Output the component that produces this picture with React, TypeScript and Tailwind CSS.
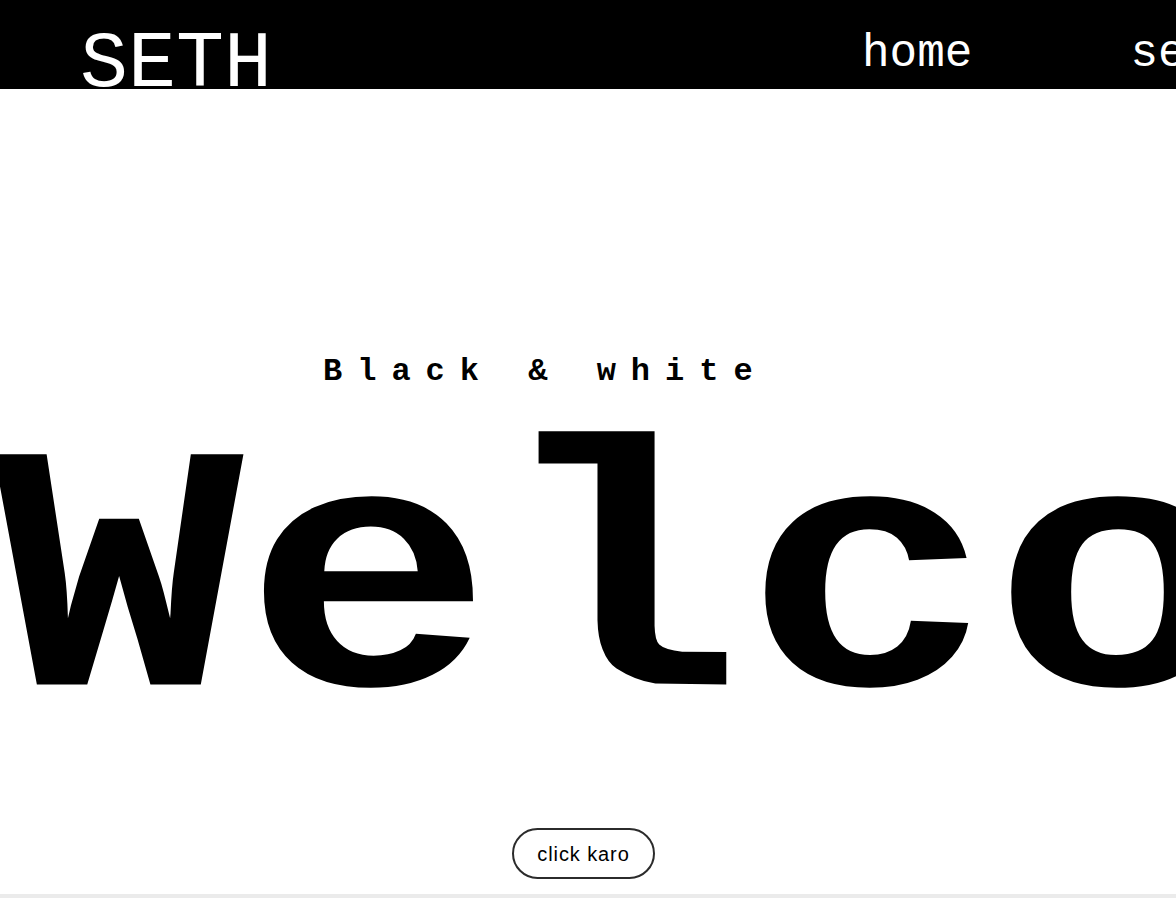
import React from "react";

export default function App() {
  const nav = ["home", "services", "about", "contact"];

  return (
    <div className="h-[898px] w-full overflow-hidden flex flex-col bg-white font-['Courier_New','Liberation_Mono',monospace]">
      {/* Header */}
      <header className="h-[89px] shrink-0 bg-black text-white flex items-start overflow-hidden whitespace-nowrap">
        <div className="pl-[80px] pt-[25px] text-[80px] leading-none w-[862px] shrink-0">SETH</div>
        <nav className="flex gap-[158px] pt-[31px] text-[46px] leading-none">
          {nav.map((item) => (
            <a key={item} href="#" className="shrink-0">
              {item}
            </a>
          ))}
        </nav>
      </header>

      {/* Hero */}
      <main className="flex-1 flex flex-col items-start whitespace-nowrap">
        <p className="mt-[267px] ml-[323px] text-[32px] leading-none font-bold tracking-[15px] text-black">
          Black &amp; white
        </p>
        <h1 className="mt-[30px] ml-[-6px] text-[416px] leading-[300px] font-bold text-black origin-bottom scale-y-[0.84]">
          Welcome
        </h1>
        <button className="mt-[110px] ml-[512px] h-[51px] w-[143px] rounded-full border-2 border-[#2b2b2b] bg-white text-[20px] tracking-[0.9px] text-black font-['Liberation_Sans',Arial,sans-serif]">
          click karo
        </button>
      </main>

      <div className="h-[4px] shrink-0 bg-[#ebebeb]" />
    </div>
  );
}
